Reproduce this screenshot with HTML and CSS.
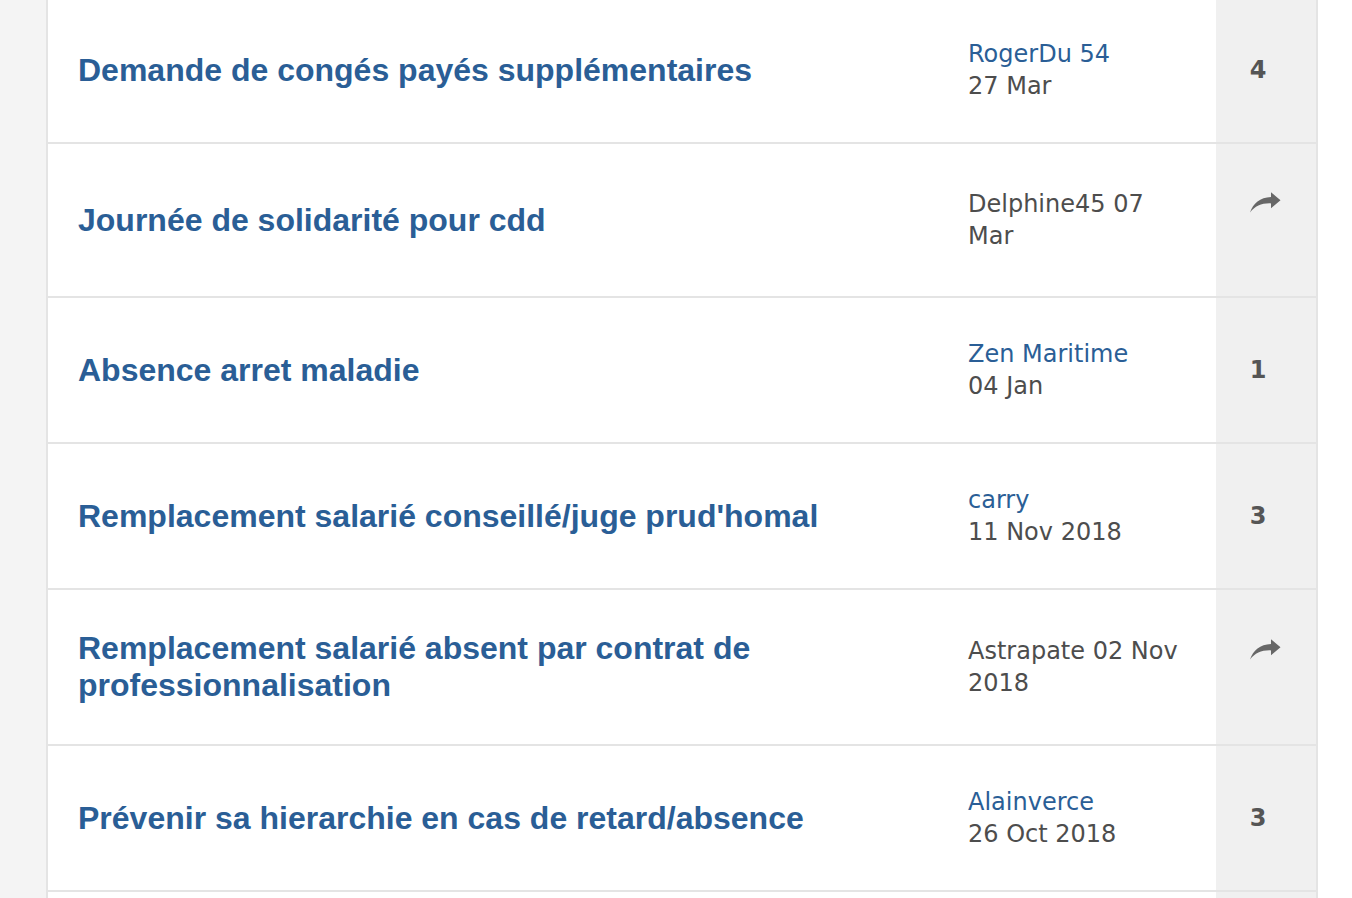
FILE: index.html
```html
<!DOCTYPE html>
<html lang="fr">
<head>
<meta charset="utf-8">
<title>Sujets</title>
<link rel="stylesheet" href="styles.css">
</head>
<body>
<div class="page">
  <div class="side"></div>
  <div class="topics">
    <div class="row">
      <div class="cell title"><a href="#">Demande de congés payés supplémentaires</a></div>
      <div class="cell meta"><a class="author" href="#">RogerDu 54</a><span class="date">27 Mar</span></div>
      <div class="cell count"><span class="num">4</span></div>
    </div>
    <div class="row">
      <div class="cell title"><a href="#">Journée de solidarité pour cdd</a></div>
      <div class="cell meta"><span class="plain">Delphine45 07 Mar</span></div>
      <div class="cell count"><span class="moved"><svg width="32" height="22" viewBox="0 0 32 22"><path d="M1 21.5C4 12.5 11 6.5 22 6L22 1.2L31.5 9.2L22 17.2L22 12.4C13 12 6 15 1 21.5Z" fill="#676767"/></svg></span></div>
    </div>
    <div class="row">
      <div class="cell title"><a href="#">Absence arret maladie</a></div>
      <div class="cell meta"><a class="author" href="#">Zen Maritime</a><span class="date">04 Jan</span></div>
      <div class="cell count"><span class="num">1</span></div>
    </div>
    <div class="row">
      <div class="cell title"><a href="#">Remplacement salarié conseillé/juge prud'homal</a></div>
      <div class="cell meta"><a class="author" href="#">carry</a><span class="date">11 Nov 2018</span></div>
      <div class="cell count"><span class="num">3</span></div>
    </div>
    <div class="row">
      <div class="cell title"><a href="#">Remplacement salarié absent par contrat de professionnalisation</a></div>
      <div class="cell meta"><span class="plain">Astrapate 02 Nov 2018</span></div>
      <div class="cell count"><span class="moved"><svg width="32" height="22" viewBox="0 0 32 22"><path d="M1 21.5C4 12.5 11 6.5 22 6L22 1.2L31.5 9.2L22 17.2L22 12.4C13 12 6 15 1 21.5Z" fill="#676767"/></svg></span></div>
    </div>
    <div class="row">
      <div class="cell title"><a href="#">Prévenir sa hierarchie en cas de retard/absence</a></div>
      <div class="cell meta"><a class="author" href="#">Alainverce</a><span class="date">26 Oct 2018</span></div>
      <div class="cell count"><span class="num">3</span></div>
    </div>
  </div>
  <div class="rest"></div>
</div>
</body>
</html>
```

FILE: styles.css
```css
html, body {
  margin: 0;
  padding: 0;
  background: #ffffff;
  height: 100%;
  overflow: hidden;
}

.page {
  display: flex;
  align-items: stretch;
  min-height: 900px;
  margin-top: -2px;
}

.side {
  width: 46px;
  flex: none;
  background: #f4f4f4;
}

.topics {
  width: 1268px;
  flex: none;
  border-left: 2px solid #e4e4e4;
  border-right: 2px solid #e4e4e4;
  background: linear-gradient(to right, #ffffff 1168px, #f0f0f0 1168px);
}

.rest {
  flex: 1;
  background: #ffffff;
}

.row {
  display: grid;
  grid-template-columns: 1fr 278px 100px;
  border-bottom: 2px solid #e4e4e4;
}

.cell {
  padding: 40px 30px;
  display: flex;
  align-items: center;
}

.title a {
  font-family: "Liberation Sans", Arial, sans-serif;
  font-weight: bold;
  font-size: 32px;
  line-height: 37px;
  color: #2a5e96;
  text-decoration: none;
}

.meta {
  flex-direction: column;
  align-items: flex-start;
  justify-content: center;
  font-family: "DejaVu Sans", Verdana, sans-serif;
  font-size: 24px;
  line-height: 32px;
  color: #4d4d4d;
}

.author {
  color: #2a5e96;
  text-decoration: none;
}

.count {
  padding: 40px 0;
  justify-content: center;
  background: #f0f0f0;
  font-family: "DejaVu Sans", Verdana, sans-serif;
  font-weight: bold;
  font-size: 24px;
  line-height: 32px;
  color: #555555;
}

.num {
  margin-right: 16px;
}

.moved {
  display: block;
  height: 72px;
  margin-right: 2px;
}

.moved svg {
  display: block;
  margin-top: 7px;
}
```
